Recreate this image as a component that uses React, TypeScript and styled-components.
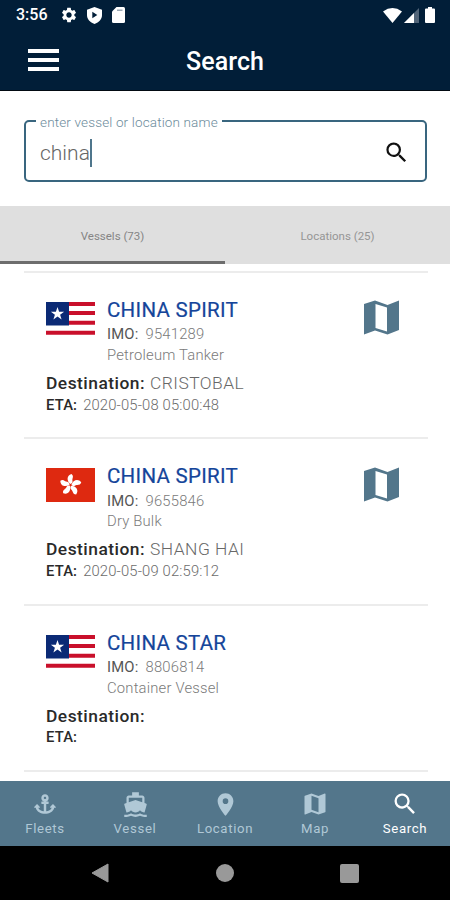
import React from "react";
import styled, { createGlobalStyle } from "styled-components";
import {
  MdDirectionsBoat,
  MdLocationOn,
  MdMap,
  MdSearch,
  MdSettings,
} from "react-icons/md";
import { FaAnchor } from "react-icons/fa";

const GlobalStyle = createGlobalStyle`
  * { box-sizing: border-box; }
  body { margin: 0; background: #fff; }
`;

const Screen = styled.div`
  width: 450px;
  height: 900px;
  display: flex;
  flex-direction: column;
  overflow: hidden;
  background: #fff;
  font-family: Roboto, sans-serif;
  white-space: nowrap;
`;

const Header = styled.header`
  flex: none;
  height: 91px;
  background: #011e38;
  border-bottom: 1px solid #020a12;
  color: #fff;
`;

const StatusBar = styled.div`
  height: 30px;
  padding: 0 15px 0 16px;
  display: flex;
  align-items: center;
  justify-content: space-between;
`;

const StatusGroup = styled.div<{ $gap: number }>`
  display: flex;
  align-items: center;
  gap: ${(p) => p.$gap}px;
  svg { display: block; }
`;

const Clock = styled.span`
  width: 33px;
  font-size: 16px;
  font-weight: 500;
  line-height: 30px;
  margin-right: 2px;
`;

const TitleBar = styled.div`
  height: 60px;
  display: grid;
  grid-template-columns: 58px 1fr 58px;
  align-items: center;
`;

const MenuButton = styled.div`
  margin-left: 28px;
  width: 31px;
  height: 22px;
  display: flex;
  flex-direction: column;
  justify-content: space-between;
`;

const MenuLine = styled.span`
  height: 4px;
  background: #fff;
`;

const Title = styled.h1`
  margin: 4px 0 0;
  text-align: center;
  font-size: 25px;
  font-weight: 500;
  line-height: 30px;
  letter-spacing: 0.1px;
`;

const SearchArea = styled.div`
  flex: none;
  height: 115px;
  padding: 20px 23px 0 24px;
`;

const SearchField = styled.fieldset`
  margin: 0;
  height: 71px;
  padding: 0 19px 0 14px;
  border: 2px solid #39667f;
  border-radius: 5px;
  min-width: 0;
`;

const SearchLabel = styled.legend`
  margin-left: -4px;
  padding: 3px 4px 0;
  height: 19px;
  font-size: 13.5px;
  font-weight: 300;
  line-height: 16px;
  letter-spacing: 0.15px;
  color: #6c8b9b;
`;

const SearchRow = styled.div`
  height: 44px;
  margin-top: 1px;
  display: flex;
  align-items: center;
  justify-content: space-between;
  svg { color: #111; margin-right: -4px; margin-top: -2px; }
`;

const SearchValue = styled.span`
  display: flex;
  align-items: center;
  font-size: 21px;
  font-weight: 300;
  color: #666;
`;

const Caret = styled.span`
  width: 2px;
  height: 28px;
  background: #4f768c;
`;

const Tabs = styled.div`
  flex: none;
  height: 58px;
  display: grid;
  grid-template-columns: 1fr 1fr;
  background: #dfdfdf;
`;

const Tab = styled.div<{ $active?: boolean }>`
  border-bottom: 3px solid ${(p) => (p.$active ? "#6d6d6d" : "transparent")};
  padding-top: 4px;
  display: flex;
  align-items: center;
  justify-content: center;
  font-size: 11.5px;
  color: ${(p) => (p.$active ? "#858585" : "#959595")};
`;

const Results = styled.main`
  flex: 1;
  min-height: 0;
  margin: 7px 22px 0 24px;
  border-top: 2px solid #ececec;
  overflow: hidden;
`;

const Result = styled.article`
  height: 166.4px;
  padding: 25px 29px 0 22px;
  border-bottom: 2px solid #ececec;
`;

const ResultTop = styled.div`
  display: grid;
  grid-template-columns: 49px 1fr 35px;
  column-gap: 12px;
  height: 74px;
  > svg { display: block; margin-top: 4px; }
  > svg:last-child { margin-top: 2.4px; }
`;

const Name = styled.div`
  height: 26.4px;
  font-size: 20.5px;
  line-height: 25px;
  letter-spacing: 0.28px;
  color: #15459a;
  -webkit-text-stroke: 0.2px #15459a;
`;

const Detail = styled.div`
  height: 20.4px;
  font-size: 14.8px;
  font-weight: 300;
  line-height: 20px;
  letter-spacing: 0.2px;
  color: #7a7a7a;
`;

const Label = styled.span<{ $gap: number; $soft?: boolean }>`
  font-weight: ${(p) => (p.$soft ? 400 : 500)};
  color: ${(p) => (p.$soft ? "#555" : "#2a2a2a")};
  margin-right: ${(p) => p.$gap}px;
`;

const Destination = styled.div`
  height: 22.6px;
  font-size: 17.4px;
  font-weight: 300;
  line-height: 23px;
  letter-spacing: 0.48px;
  color: #686868;
`;

const Eta = styled.div`
  height: 22px;
  font-size: 14.8px;
  font-weight: 300;
  line-height: 21px;
  letter-spacing: 0.15px;
  color: #6c6c6c;
`;

const BottomNav = styled.nav`
  flex: none;
  height: 65px;
  display: grid;
  grid-template-columns: repeat(5, 1fr);
  background: #53768b;
`;

const NavItem = styled.div<{ $active?: boolean }>`
  display: flex;
  flex-direction: column;
  align-items: center;
  padding-top: 9px;
  color: ${(p) => (p.$active ? "#fff" : "#b0c8d6")};
  font-size: 13.2px;
  line-height: 20px;
  letter-spacing: 0.65px;
`;

const NavIcon = styled.span`
  height: 29px;
  padding-bottom: 1px;
  display: flex;
  align-items: center;
  justify-content: center;
`;

const SystemNav = styled.div`
  flex: none;
  height: 54px;
  padding-right: 1px;
  background: #000;
  display: grid;
  grid-template-columns: 1fr 50px 1fr;
  align-items: center;
  justify-items: center;
  svg { display: block; }
`;

const SystemSlot = styled.div`
  display: flex;
`;

const ShieldIcon = () => (
  <svg width="15" height="17" viewBox="0 0 15 17">
    <path d="M7.5 0 15 2.8V8c0 4.2-3 7.4-7.5 9C3 15.400 0 12.200 0 8V2.800Z" fill="#fff" />
    <path d="M5.300 4.800v6.400l5-3.200Z" fill="#011e38" />
  </svg>
);

const CardIcon = () => (
  <svg width="14" height="16" viewBox="-1 0 14 16">
    <path d="M4.500 0H11.500Q13 0 13 1.500V14.500Q13 16 11.500 16H1.500Q0 16 0 14.500V4.500Z" fill="#fff" />
    <path d="M5 3.200h5.500" stroke="#8595a4" strokeWidth="1.200" />
  </svg>
);

const WifiIcon = () => (
  <svg width="19" height="15" viewBox="0 0 19 15">
    <path d="M0 3.500Q9.500-3.300 19 3.500L9.500 15Z" fill="#fff" />
  </svg>
);

const SignalIcon = () => (
  <svg width="15" height="15" viewBox="0 0 15 15">
    <path d="M0 15 15 0v15Z" fill="#526579" />
    <path d="M0 15 10 5v10Z" fill="#fff" />
  </svg>
);

const BatteryIcon = () => (
  <svg width="14" height="16" viewBox="-4 0 14 16">
    <path d="M3 0h4v1.500h2Q10 1.500 10 2.500V15Q10 16 9 16H1Q0 16 0 15V2.500Q0 1.500 1 1.500h2Z" fill="#fff" />
  </svg>
);

const LiberiaFlag = () => (
  <svg width="49" height="33" viewBox="0 0 49 33">
    <path fill="#fff" d="M0 0h49v33H0z" />
    <path d="M0 2h49M0 11h49M0 20.700h49M0 30.700h49" stroke="#c9102b" strokeWidth="4" />
    <path fill="#0b2a75" d="M0 0h23v23.500H0z" />
    <path
      fill="#fff"
      d="m11.500 5 1.600 4.700h5l-4 3 1.500 4.800-4.100-2.900-4.100 2.900 1.500-4.800-4-3h5z"
    />
  </svg>
);

const HongKongFlag = () => (
  <svg width="49" height="34" viewBox="0 0 49 34">
    <path fill="#de2910" d="M0 0h49v34H0z" />
    {[0, 72, 144, 216, 288].map((angle) => (
      <g key={angle} transform={`translate(24.500 17) rotate(${angle})`}>
        <path fill="#fff" d="M0-1C-4-4-4-9.500 1-11 4-8.500 1.200-6.500 2-4 2.200-2.500 1.200-1.300 0-1Z" />
      </g>
    ))}
  </svg>
);

const ChartIcon = () => (
  <svg width="35" height="35" viewBox="0 0 35 35">
    <path
      fill="#53768b"
      fillRule="evenodd"
      d="M0 4 11 .500 23.500 5 35 .500V30L23.500 34.500 11 30.500 0 34.500ZM11.500 4V28L23 31.500V7.500Z"
    />
  </svg>
);

type Vessel = {
  name: string;
  imo: string;
  kind: string;
  destination?: string;
  eta?: string;
  flag: React.ReactNode;
  mapped?: boolean;
};

const vessels: Vessel[] = [
  {
    name: "CHINA SPIRIT",
    imo: "9541289",
    kind: "Petroleum Tanker",
    destination: "CRISTOBAL",
    eta: "2020-05-08 05:00:48",
    flag: <LiberiaFlag />,
    mapped: true,
  },
  {
    name: "CHINA SPIRIT",
    imo: "9655846",
    kind: "Dry Bulk",
    destination: "SHANG HAI",
    eta: "2020-05-09 02:59:12",
    flag: <HongKongFlag />,
    mapped: true,
  },
  {
    name: "CHINA STAR",
    imo: "8806814",
    kind: "Container Vessel",
    flag: <LiberiaFlag />,
  },
];

const navItems = [
  { label: "Fleets", icon: <FaAnchor size={22} /> },
  { label: "Vessel", icon: <MdDirectionsBoat size={27} /> },
  { label: "Location", icon: <MdLocationOn size={27} /> },
  { label: "Map", icon: <MdMap size={28} /> },
  { label: "Search", icon: <MdSearch size={28} />, active: true },
];

export default function App() {
  return (
    <Screen>
      <GlobalStyle />
      <Header>
        <StatusBar>
          <StatusGroup $gap={9}>
            <Clock>3:56</Clock>
            <MdSettings size={18} />
            <ShieldIcon />
            <CardIcon />
          </StatusGroup>
          <StatusGroup $gap={2}>
            <WifiIcon />
            <SignalIcon />
            <BatteryIcon />
          </StatusGroup>
        </StatusBar>
        <TitleBar>
          <MenuButton>
            <MenuLine />
            <MenuLine />
            <MenuLine />
          </MenuButton>
          <Title>Search</Title>
        </TitleBar>
      </Header>

      <SearchArea>
        <SearchField>
          <SearchLabel>enter vessel or location name</SearchLabel>
          <SearchRow>
            <SearchValue>
              china
              <Caret />
            </SearchValue>
            <MdSearch size={27} />
          </SearchRow>
        </SearchField>
      </SearchArea>

      <Tabs>
        <Tab $active>Vessels (73)</Tab>
        <Tab>Locations (25)</Tab>
      </Tabs>

      <Results>
        {vessels.map((v) => (
          <Result key={v.imo}>
            <ResultTop>
              {v.flag}
              <div>
                <Name>{v.name}</Name>
                <Detail>
                  <Label $gap={7} $soft>IMO:</Label>
                  {v.imo}
                </Detail>
                <Detail>{v.kind}</Detail>
              </div>
              {v.mapped && <ChartIcon />}
            </ResultTop>
            <Destination>
              <Label $gap={5}>Destination:</Label>
              {v.destination}
            </Destination>
            <Eta>
              <Label $gap={6}>ETA:</Label>
              {v.eta}
            </Eta>
          </Result>
        ))}
      </Results>

      <BottomNav>
        {navItems.map((n) => (
          <NavItem key={n.label} $active={n.active}>
            <NavIcon>{n.icon}</NavIcon>
            {n.label}
          </NavItem>
        ))}
      </BottomNav>

      <SystemNav>
        <SystemSlot>
          <svg width="18" height="20" viewBox="0 0 18 20">
            <path d="M17 1v18L1 10Z" fill="#999" stroke="#999" strokeLinejoin="round" />
          </svg>
        </SystemSlot>
        <SystemSlot>
          <svg width="18" height="18">
            <circle cx="9" cy="9" r="9" fill="#999" />
          </svg>
        </SystemSlot>
        <SystemSlot>
          <svg width="19" height="19">
            <rect width="19" height="19" rx="2" fill="#999" />
          </svg>
        </SystemSlot>
      </SystemNav>
    </Screen>
  );
}
